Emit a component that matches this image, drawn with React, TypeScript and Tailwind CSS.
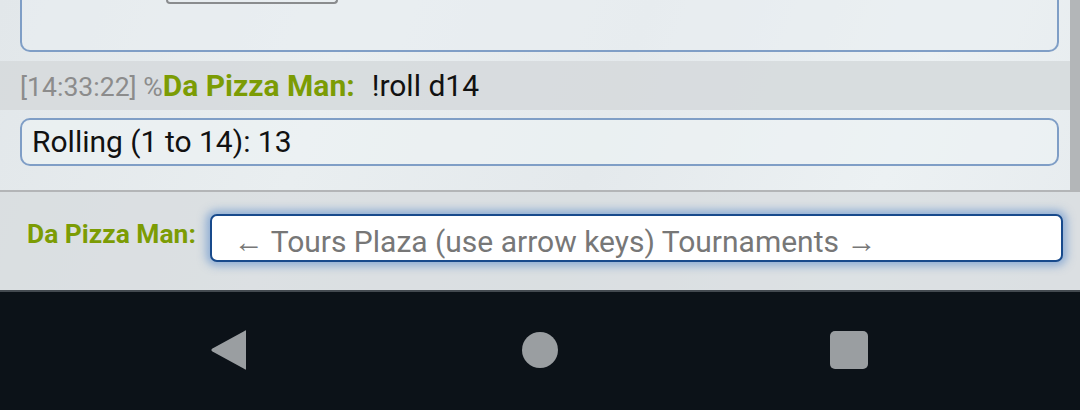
import React from "react";

export default function App() {
  return (
    <div
      className="w-[1080px] h-[410px] overflow-hidden flex flex-col"
      style={{ fontFamily: "Roboto, 'Noto Sans', sans-serif" }}
    >
      <div className="flex-1 flex flex-col bg-[linear-gradient(110deg,#e2e7ea_0%,#e9eef0_30%,#e4e9ec_55%,#ecf1f3_80%,#e6ebee_100%)]">
        {/* chat area */}
        <div className="h-[190px] flex">
          <div className="flex-1 flex flex-col">
            <div className="ml-[20px] mr-[11px] h-[52px] border-x-2 border-b-2 border-[#7f9ec6] rounded-b-[10px] bg-[#eaeff1]/60">
              <div className="ml-[144px] w-[172px] h-[4px] border-x-2 border-b-2 border-[#8a8c8e] rounded-b-[5px]" />
            </div>
            <div className="mt-[9px] h-[49px] bg-[#d6dadd]/90 flex items-center pl-[20px]">
              <div className="leading-none whitespace-nowrap text-[30px]">
                <span className="text-[#8c8c8c] text-[26.6px]">[14:33:22] %</span>
                <span className="text-[#7c9c04] font-bold">Da Pizza Man:</span>
                <span className="text-[#111] ml-[17px]">!roll d14</span>
              </div>
            </div>
            <div className="mt-[8px] ml-[20px] mr-[11px] h-[48px] border-2 border-[#7f9ec6] rounded-[10px] bg-[#edf2f4]/70 flex items-center pl-[10px] text-[30px] leading-none text-[#111]">
              Rolling (1 to 14): 13
            </div>
          </div>
          <div className="w-[10px] bg-[#b3b6b8]" />
        </div>
        <div className="h-[2px] bg-[#b3b5b7]" />
        {/* input area */}
        <div className="h-[98px] bg-[#d5dadd]/70 flex items-center pl-[27px] pr-[17px] gap-[14px]">
          <span className="text-[#7c9c04] font-bold text-[26.4px] leading-none whitespace-nowrap -mt-[14px]">Da Pizza Man:</span>
          <div className="flex-1 h-[48px] bg-white border-2 border-[#184a8c] rounded-[7px] shadow-[0_0_9px_4px_rgba(70,125,200,0.5)] flex items-end pl-[22px] pb-[3px] text-[30px] leading-none text-[#777] whitespace-nowrap mt-[-6px]">
            <span>← Tours Plaza (use arrow keys) Tournaments →</span>
          </div>
        </div>
      </div>
      <div className="h-[2px] bg-[#444a50]" />
      {/* nav bar */}
      <div className="h-[118px] bg-[#0c1218]">
        <div className="relative w-full h-full">
          <svg className="absolute left-[210px] top-[37px]" width="37" height="42" viewBox="0 0 37 42">
            <path d="M36 2.5 L36 39.5 Q36 41.5 34.5 40 L2 22.3 Q0.6 21 2 19.7 L34.5 2 Q36 0.5 36 2.5 Z" fill="#9a9ea1" />
          </svg>
          <div className="absolute left-[522px] top-[40px] w-[36px] h-[36px] rounded-full bg-[#9a9ea1]" />
          <div className="absolute left-[830px] top-[39px] w-[38px] h-[38px] rounded-[5px] bg-[#9a9ea1]" />
        </div>
      </div>
    </div>
  );
}
